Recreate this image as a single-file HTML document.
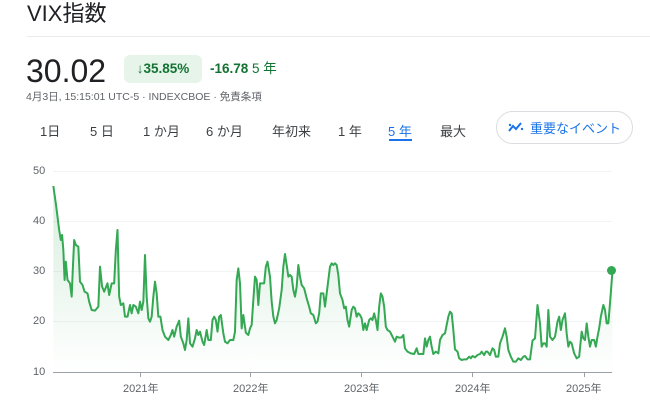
<!DOCTYPE html>
<html><head><meta charset="utf-8"><style>
body{margin:0;width:650px;height:404px;background:#fff;font-family:"Liberation Sans","Noto Sans CJK JP",sans-serif;position:relative;overflow:hidden;color:#202124}
.a{position:absolute;white-space:nowrap}
.tab{position:absolute;top:121px;font-size:13px;color:#3c4043}
.yl{position:absolute;left:33px;font-size:11px;color:#5f6368}
.xl{position:absolute;top:380px;font-size:11px;color:#5f6368}
</style></head><body>
<div class="a" style="left:27px;top:0px;font-size:22px;line-height:28px">VIX指数</div>
<div class="a" style="left:27px;top:36px;width:623px;height:1px;background:#e8eaed"></div>
<div class="a" style="left:26px;top:52px;font-size:32px;line-height:38px;color:#202124">30.02</div>
<div class="a" style="left:124px;top:55px;width:78px;height:28px;background:#e6f4ea;border-radius:6px;color:#137333;font-size:13.5px;font-weight:bold;line-height:28px;text-align:center">↓35.85%</div>
<div class="a" style="left:210px;top:59px;font-size:13.5px;color:#137333;line-height:20px"><b>-16.78</b> 5 年</div>
<div class="a" style="left:26px;top:89px;font-size:10.5px;color:#5f6368">4月3日, 15:15:01 UTC-5 · INDEXCBOE · 免責条項</div>
<div class="tab" style="left:40px">1日</div>
<div class="tab" style="left:90px">5 日</div>
<div class="tab" style="left:143px">1 か月</div>
<div class="tab" style="left:206px">6 か月</div>
<div class="tab" style="left:272px">年初来</div>
<div class="tab" style="left:338px">1 年</div>
<div class="tab" style="left:388px;color:#1a73e8">5 年</div>
<div class="a" style="left:389px;top:139px;width:23px;height:2px;background:#1a73e8"></div>
<div class="tab" style="left:440px">最大</div>
<div class="a" style="left:496px;top:111px;width:135px;height:31px;border:1px solid #dadce0;border-radius:17px"></div>
<svg class="a" style="left:508px;top:120px" width="16" height="14" viewBox="0 0 16 14"><path d="M1 11 L5 6 L8 9 L13 3" stroke="#1a73e8" stroke-width="2" fill="none"/><circle cx="2" cy="5" r="1.2" fill="#1a73e8"/><circle cx="14" cy="9" r="1.2" fill="#1a73e8"/></svg>
<div class="a" style="left:530px;top:118px;font-size:13px;color:#1a73e8">重要なイベント</div>
<div class="yl" style="top:165px">50</div>
<div class="yl" style="top:215px">40</div>
<div class="yl" style="top:265px">30</div>
<div class="yl" style="top:315px">20</div>
<div class="yl" style="top:366px">10</div>
<div class="a" style="left:53px;top:171px;width:559px;height:1px;background:#f1f3f4"></div>
<div class="a" style="left:53px;top:221px;width:559px;height:1px;background:#f1f3f4"></div>
<div class="a" style="left:53px;top:271px;width:559px;height:1px;background:#f1f3f4"></div>
<div class="a" style="left:53px;top:321px;width:559px;height:1px;background:#f1f3f4"></div>
<div class="a" style="left:53px;top:372px;width:559px;height:1px;background:#9aa0a6"></div>
<div class="xl" style="left:123px">2021年</div>
<div class="xl" style="left:233px">2022年</div>
<div class="xl" style="left:344px">2023年</div>
<div class="xl" style="left:455px">2024年</div>
<div class="xl" style="left:566px">2025年</div>
<svg class="a" style="left:0;top:150px" width="650" height="254" viewBox="0 0 1560 762" preserveAspectRatio="none">
<defs><linearGradient id="g" x1="0" y1="0" x2="0" y2="1"><stop offset="0" stop-color="#34a853" stop-opacity="0.2"/><stop offset="1" stop-color="#34a853" stop-opacity="0"/></linearGradient></defs>
<polygon id="p" fill="url(#g)" points="128,667 128,108 135,170 142,240 146,270 149,255 152,300 155,390 158,335 162,390 168,400 172,440 175,350 178,270 182,285 188,290 192,395 198,405 203,425 210,430 214,455 220,480 228,482 236,470 240,350 245,410 250,425 258,400 262,435 268,400 274,400 278,300 282,240 286,440 290,465 296,460 300,500 306,500 312,465 316,490 320,465 326,470 332,490 336,455 340,480 344,455 348,315 352,440 356,505 360,515 364,500 368,440 372,395 376,430 380,500 385,500 390,540 396,560 404,570 410,555 414,540 418,560 424,530 430,512 434,560 440,580 444,600 448,570 452,505 456,580 462,590 468,565 472,540 476,555 480,545 486,575 490,585 496,540 500,570 506,570 510,510 514,500 518,510 522,545 526,500 530,495 536,550 540,575 546,580 552,570 560,570 564,545 568,390 572,355 576,400 580,535 584,495 590,548 596,555 600,535 604,525 608,450 612,380 616,390 620,465 624,400 630,400 634,400 638,350 642,335 648,380 652,455 656,500 660,520 664,510 670,475 676,420 680,350 684,312 688,345 692,380 696,375 700,380 704,420 708,440 712,410 716,345 720,380 724,405 730,415 736,445 742,470 746,490 752,495 758,520 762,515 766,490 770,430 776,430 780,470 786,410 792,350 796,340 800,345 804,340 808,345 812,375 816,430 822,450 826,475 830,470 834,510 838,530 844,480 848,470 852,475 856,500 860,490 864,495 868,505 872,540 876,520 880,540 886,510 890,505 894,510 898,490 902,510 906,540 910,470 914,430 918,440 922,470 926,530 930,540 936,545 940,555 944,565 948,575 952,560 958,563 964,562 968,555 972,595 978,605 986,610 994,612 1000,595 1004,612 1010,612 1016,612 1020,565 1024,590 1028,570 1032,560 1036,590 1040,612 1046,605 1052,610 1056,570 1062,555 1068,550 1072,525 1076,500 1080,485 1084,490 1088,540 1092,598 1098,605 1102,625 1108,630 1114,628 1120,628 1126,620 1130,625 1134,618 1140,622 1146,615 1152,612 1156,605 1162,615 1166,605 1170,605 1176,615 1182,595 1186,600 1190,620 1196,620 1200,580 1206,560 1212,535 1216,560 1220,600 1226,620 1232,635 1238,635 1244,625 1250,630 1256,620 1260,618 1266,628 1272,628 1278,572 1284,565 1290,465 1296,520 1300,590 1304,580 1308,580 1312,590 1316,480 1320,560 1326,570 1332,560 1338,515 1342,500 1346,540 1350,510 1356,490 1360,550 1364,590 1368,575 1372,580 1378,610 1384,625 1390,620 1396,545 1400,565 1404,570 1408,520 1412,560 1416,590 1420,570 1426,570 1430,590 1434,560 1438,535 1442,500 1448,465 1452,480 1456,520 1460,520 1464,460 1470,362 1470,667"/>
<polyline fill="none" stroke="#34a853" stroke-width="2" vector-effect="non-scaling-stroke" stroke-linejoin="round" points="128,108 135,170 142,240 146,270 149,255 152,300 155,390 158,335 162,390 168,400 172,440 175,350 178,270 182,285 188,290 192,395 198,405 203,425 210,430 214,455 220,480 228,482 236,470 240,350 245,410 250,425 258,400 262,435 268,400 274,400 278,300 282,240 286,440 290,465 296,460 300,500 306,500 312,465 316,490 320,465 326,470 332,490 336,455 340,480 344,455 348,315 352,440 356,505 360,515 364,500 368,440 372,395 376,430 380,500 385,500 390,540 396,560 404,570 410,555 414,540 418,560 424,530 430,512 434,560 440,580 444,600 448,570 452,505 456,580 462,590 468,565 472,540 476,555 480,545 486,575 490,585 496,540 500,570 506,570 510,510 514,500 518,510 522,545 526,500 530,495 536,550 540,575 546,580 552,570 560,570 564,545 568,390 572,355 576,400 580,535 584,495 590,548 596,555 600,535 604,525 608,450 612,380 616,390 620,465 624,400 630,400 634,400 638,350 642,335 648,380 652,455 656,500 660,520 664,510 670,475 676,420 680,350 684,312 688,345 692,380 696,375 700,380 704,420 708,440 712,410 716,345 720,380 724,405 730,415 736,445 742,470 746,490 752,495 758,520 762,515 766,490 770,430 776,430 780,470 786,410 792,350 796,340 800,345 804,340 808,345 812,375 816,430 822,450 826,475 830,470 834,510 838,530 844,480 848,470 852,475 856,500 860,490 864,495 868,505 872,540 876,520 880,540 886,510 890,505 894,510 898,490 902,510 906,540 910,470 914,430 918,440 922,470 926,530 930,540 936,545 940,555 944,565 948,575 952,560 958,563 964,562 968,555 972,595 978,605 986,610 994,612 1000,595 1004,612 1010,612 1016,612 1020,565 1024,590 1028,570 1032,560 1036,590 1040,612 1046,605 1052,610 1056,570 1062,555 1068,550 1072,525 1076,500 1080,485 1084,490 1088,540 1092,598 1098,605 1102,625 1108,630 1114,628 1120,628 1126,620 1130,625 1134,618 1140,622 1146,615 1152,612 1156,605 1162,615 1166,605 1170,605 1176,615 1182,595 1186,600 1190,620 1196,620 1200,580 1206,560 1212,535 1216,560 1220,600 1226,620 1232,635 1238,635 1244,625 1250,630 1256,620 1260,618 1266,628 1272,628 1278,572 1284,565 1290,465 1296,520 1300,590 1304,580 1308,580 1312,590 1316,480 1320,560 1326,570 1332,560 1338,515 1342,500 1346,540 1350,510 1356,490 1360,550 1364,590 1368,575 1372,580 1378,610 1384,625 1390,620 1396,545 1400,565 1404,570 1408,520 1412,560 1416,590 1420,570 1426,570 1430,590 1434,560 1438,535 1442,500 1448,465 1452,480 1456,520 1460,520 1464,460 1470,362"/>
</svg>
<div class="a" style="left:140px;top:372px;width:1px;height:5px;background:#9aa0a6"></div>
<div class="a" style="left:250px;top:372px;width:1px;height:5px;background:#9aa0a6"></div>
<div class="a" style="left:361px;top:372px;width:1px;height:5px;background:#9aa0a6"></div>
<div class="a" style="left:472px;top:372px;width:1px;height:5px;background:#9aa0a6"></div>
<div class="a" style="left:584px;top:372px;width:1px;height:5px;background:#9aa0a6"></div>
<div class="a" style="left:607px;top:266px;width:9px;height:9px;border-radius:50%;background:#34a853"></div>
</body></html>
